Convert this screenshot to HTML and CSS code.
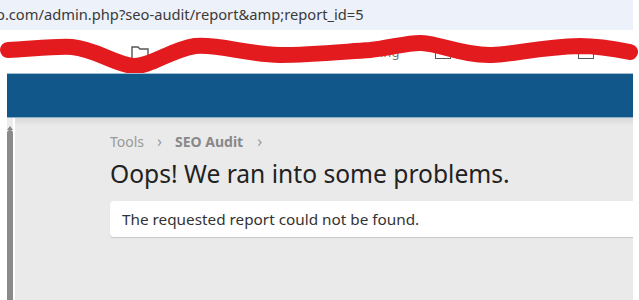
FILE: index.html
```html
<!DOCTYPE html>
<html lang="en">
<head>
    <meta charset="UTF-8">
    <meta name="viewport" content="width=device-width, initial-scale=1.0">
    <title>SEO Audit - Error</title>
    <link rel="stylesheet" href="styles.css">
</head>
<body>

    <div class="window">
        <!-- Address bar -->
        <div class="address-bar">
            <span class="url">o.com/admin.php?seo-audit/report&amp;amp;report_id=5</span>
        </div>

        <!-- Bookmarks bar (scribbled over) -->
        <div class="bookmarks">
            <svg class="bm-folder" width="18" height="14" viewBox="0 0 18 14">
                <path d="M1 1 H7 L9 3 H17 V13 H1 Z" fill="none" stroke="#555" stroke-width="1.4"/>
            </svg>
            <span class="bm-text">ing</span>
            <span class="bm-box first"></span>
            <span class="bm-box last"></span>
            <svg class="scribble" width="639" height="43" viewBox="0 30 639 43">
                <path d="M8 50 C 30 49, 55 46, 72 47 C 95 49, 115 64, 133 66 C 150 67, 170 50, 195 46 C 220 44, 245 54, 280 55 C 310 55, 340 52, 370 50 C 390 48, 410 42, 422 43 C 440 44, 465 56, 492 55 C 515 54, 540 47, 580 46 C 600 46, 615 49, 630 52"
                      fill="none" stroke="#e41b1e" stroke-width="16" stroke-linecap="round" stroke-linejoin="round"/>
            </svg>
        </div>

        <div class="app">
            <div class="top-header"></div>
            <div class="app-body">
                <div class="scrollbar">
                    <span class="arrow"></span>
                    <span class="thumb"></span>
                </div>
                <div class="content">
                    <div class="breadcrumb">
                        <span class="crumb">Tools</span>
                        <span class="sep">&rsaquo;</span>
                        <span class="crumb current">SEO Audit</span>
                        <span class="sep">&rsaquo;</span>
                    </div>
                    <h1>Oops! We ran into some problems.</h1>
                    <div class="message">The requested report could not be found.</div>
                </div>
            </div>
        </div>
    </div>

</body>
</html>
```

FILE: styles.css
```css
* { margin: 0; padding: 0; box-sizing: border-box; }
body {
    background: white;
    font-family: 'Noto Sans', 'Open Sans', sans-serif;
    width: 639px;
    height: 300px;
    overflow: hidden;
}
.window {
    width: 633px;
    height: 300px;
    display: flex;
    flex-direction: column;
}
.address-bar {
    height: 30px;
    background: #edf1f9;
    overflow: hidden;
    white-space: nowrap;
}
.url {
    display: block;
    margin-left: -4px;
    padding-top: 4px;
    font-size: 14.7px;
    color: #3a3a3a;
}

/* Bookmarks bar */
.bookmarks {
    position: relative;
    height: 43px;
    background: white;
}
.bm-folder {
    position: absolute;
    left: 131px;
    top: 16px;
}
.bm-text {
    position: absolute;
    left: 380px;
    top: 13px;
    font-size: 13px;
    color: #777;
}
.bm-box {
    position: absolute;
    top: 22px;
    width: 16px;
    height: 7px;
    border: 1.5px solid #555;
    border-top: none;
}
.bm-box.first { left: 435px; }
.bm-box.last { left: 578px; }
.scribble {
    position: absolute;
    left: 0;
    top: 0;
}

/* App frame */
.app {
    flex: 1;
    margin-left: 7px;
    display: flex;
    flex-direction: column;
    border-top: 1px solid #a7c0d6;
}
.top-header {
    height: 44px;
    background: #12578a;
    border-bottom: 1px solid #8fb0cc;
}
.app-body {
    flex: 1;
    display: flex;
    background: #eaeaea;
}
.scrollbar {
    width: 8px;
    background: white;
    border-right: 2px solid white;
    display: flex;
    flex-direction: column;
    align-items: stretch;
}
.arrow {
    height: 12px;
    background: #ececec;
    display: flex;
    justify-content: center;
    padding-top: 4px;
}
.arrow::before {
    content: "";
    border-left: 3px solid transparent;
    border-right: 3px solid transparent;
    border-bottom: 4px solid #888;
}
.thumb {
    flex: 1;
    background: #8a8a8a;
    border-radius: 3px 3px 0 0;
}
.content {
    flex: 1;
    padding: 13px 0 0 95px;
    background: linear-gradient(#d9d9d9, #eaeaea 8px);
}
.breadcrumb {
    display: flex;
    align-items: center;
    font-size: 14px;
    color: #999;
    height: 20px;
}
.sep {
    font-size: 16px;
    color: #999;
    margin: 0 13px 0 13px;
}
.crumb.current {
    font-weight: bold;
    color: #888;
}
.crumb.current + .sep {
    margin-left: 14px;
}
h1 {
    margin-top: 7px;
    font-size: 24.6px;
    font-weight: normal;
    color: #222;
    line-height: 32px;
}
.message {
    margin-top: 11px;
    background: white;
    border-radius: 4px 0 0 4px;
    box-shadow: 0 1px 1px rgba(0, 0, 0, 0.15);
    padding: 8px 12px;
    font-size: 15.3px;
    color: #333;
    height: 36px;
}
```
